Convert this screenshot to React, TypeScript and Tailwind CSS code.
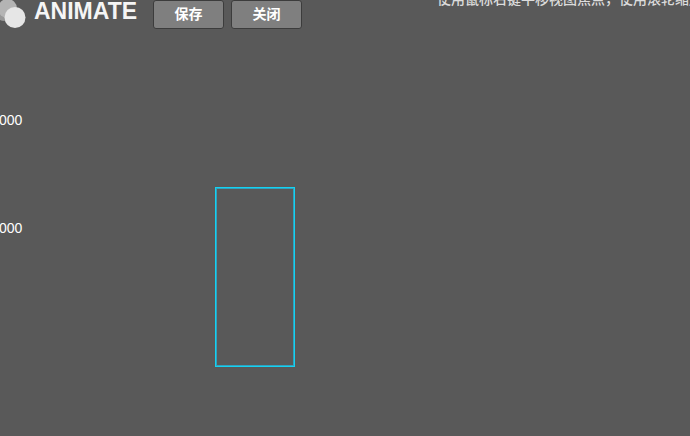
const cjk = '"Liberation Sans", "Noto Sans CJK SC", sans-serif';

function Logo() {
	return (
		<svg width="34" height="29" viewBox="0 0 34 29" className="shrink-0">
			<circle cx="4" cy="12" r="9" fill="#979797" />
			<circle cx="7.5" cy="8.5" r="9.5" fill="#b4b4b4" />
			<circle cx="15" cy="17.5" r="10.5" fill="#e6e6e6" />
		</svg>
	);
}

function Button({ label }: { label: string }) {
	return (
		<button className="flex h-[29px] w-[71px] items-center justify-center rounded-[3px] border border-[#3c3c3c] bg-[#7f7f7f] text-[14px] font-bold text-white">
			{label}
		</button>
	);
}

export default function App() {
	return (
		<div
			className="h-[436px] w-[690px] overflow-hidden bg-[#595959]"
			style={{ fontFamily: cjk }}
		>
			<header className="flex h-[29px] items-start">
				<Logo />
				<span className="-mt-[3px] w-[119px] shrink-0 text-[23px] leading-[28px] font-bold whitespace-nowrap text-[#f5f5f5]">
					ANIMATE
				</span>
				<div className="flex gap-[7px]">
					<Button label="保存" />
					<Button label="关闭" />
				</div>
				<p className="-mt-[10px] ml-[135px] text-[14px] leading-[18px] font-medium whitespace-nowrap text-[#dcdcdc]">
					使用鼠标右键平移视图焦点，使用滚轮缩放
				</p>
			</header>

			<main className="flex">
				<div className="-ml-[1px] flex w-[216px] flex-col gap-[90px] pt-[82px] text-[14px] leading-[18px] text-white">
					<span>000</span>
					<span>000</span>
				</div>
				<div className="mt-[158px] h-[180px] w-[80px] border border-[#14d2f2] shadow-[inset_0_0_0_1px_#2fa3bf]" />
			</main>
		</div>
	);
}
